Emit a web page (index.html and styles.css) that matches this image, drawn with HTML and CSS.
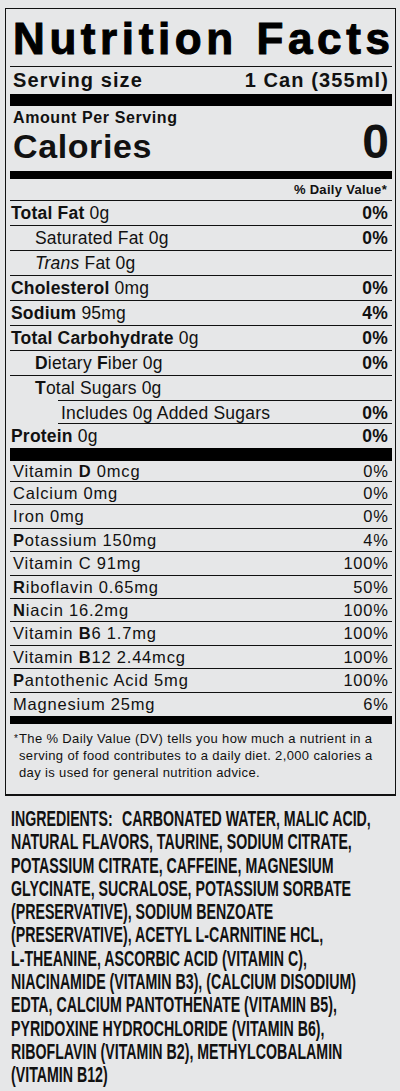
FILE: index.html
```html
<!DOCTYPE html>
<html lang="en">
<head>
    <meta charset="UTF-8">
    <meta name="viewport" content="width=device-width, initial-scale=1.0">
    <title>Nutrition Facts</title>
    <link rel="stylesheet" href="styles.css">
</head>
<body>
    <div class="label">
        <h1 class="title">Nutrition Facts</h1>

        <div class="serving">
            <span>Serving size</span>
            <span>1 Can (355ml)</span>
        </div>

        <div class="amount">Amount Per Serving</div>
        <div class="calories">
            <span class="cal-label">Calories</span>
            <span class="cal-value">0</span>
        </div>

        <div class="dv-head">% Daily Value*</div>

        <div class="row"><span><b>Total Fat</b> 0g</span><b>0%</b></div>
        <div class="row sub"><span>Saturated Fat 0g</span><b>0%</b></div>
        <div class="row sub"><span><i>Trans</i> Fat 0g</span></div>
        <div class="row"><span><b>Cholesterol</b> 0mg</span><b>0%</b></div>
        <div class="row"><span><b>Sodium</b> 95mg</span><b>4%</b></div>
        <div class="row"><span><b>Total Carbohydrate</b> 0g</span><b>0%</b></div>
        <div class="row sub"><span><b>D</b>ietary <b>F</b>iber 0g</span><b>0%</b></div>
        <div class="row sub no-line"><span><b>T</b>otal Sugars 0g</span></div>
        <div class="row added"><span>Includes 0g Added Sugars</span><b>0%</b></div>
        <div class="row last"><span><b>Protein</b> 0g</span><b>0%</b></div>

        <div class="vit first"><span>Vitamin <b>D</b> 0mcg</span><span>0%</span></div>
        <div class="vit"><span>Calcium 0mg</span><span>0%</span></div>
        <div class="vit"><span>Iron 0mg</span><span>0%</span></div>
        <div class="vit"><span><b>P</b>otassium 150mg</span><span>4%</span></div>
        <div class="vit"><span>Vitamin C 91mg</span><span>100%</span></div>
        <div class="vit"><span><b>R</b>iboflavin 0.65mg</span><span>50%</span></div>
        <div class="vit"><span><b>N</b>iacin 16.2mg</span><span>100%</span></div>
        <div class="vit"><span>Vitamin <b>B</b>6 1.7mg</span><span>100%</span></div>
        <div class="vit"><span>Vitamin <b>B</b>12 2.44mcg</span><span>100%</span></div>
        <div class="vit"><span><b>P</b>antothenic Acid 5mg</span><span>100%</span></div>
        <div class="vit last"><span>Magnesium 25mg</span><span>6%</span></div>

        <div class="note">
            <span class="star">*</span>
            <p>The % Daily Value (DV) tells you how much a nutrient in a<br>serving of food contributes to a daily diet. 2,000 calories a<br>day is used for general nutrition advice.</p>
        </div>
    </div>

    <div class="ingredients">
        <div class="line">INGREDIENTS:<span class="gap"></span>CARBONATED WATER, MALIC ACID,</div>
        <div class="line">NATURAL FLAVORS, TAURINE, SODIUM CITRATE,</div>
        <div class="line">POTASSIUM CITRATE, CAFFEINE, MAGNESIUM</div>
        <div class="line">GLYCINATE, SUCRALOSE, POTASSIUM SORBATE</div>
        <div class="line">(PRESERVATIVE), SODIUM BENZOATE</div>
        <div class="line">(PRESERVATIVE), ACETYL L-CARNITINE HCL,</div>
        <div class="line">L-THEANINE, ASCORBIC ACID (VITAMIN C),</div>
        <div class="line">NIACINAMIDE (VITAMIN B3), (CALCIUM DISODIUM)</div>
        <div class="line">EDTA, CALCIUM PANTOTHENATE (VITAMIN B5),</div>
        <div class="line">PYRIDOXINE HYDROCHLORIDE (VITAMIN B6),</div>
        <div class="line">RIBOFLAVIN (VITAMIN B2), METHYLCOBALAMIN</div>
        <div class="line">(VITAMIN B12)</div>
    </div>
</body>
</html>
```

FILE: styles.css
```css
* {
    margin: 0;
    padding: 0;
    box-sizing: border-box;
}

html, body {
    overflow-x: hidden;
}

body {
    font-family: "Liberation Sans", Arial, sans-serif;
    background: #e6e7e8;
    color: #111;
    padding-top: 8px;
}

.label {
    margin-left: 5px;
    width: 391px;
    border: 1px solid #111;
    border-bottom-width: 2px;
    padding: 0 3px 0 4px;
}

.title {
    font-size: 44px;
    font-weight: bold;
    line-height: 47px;
    letter-spacing: 4.6px;
    word-spacing: 2px;
    -webkit-text-stroke: 1px #000;
    color: #000;
    padding: 6px 0 4px 3px;
    border-bottom: 1px solid #111;
    white-space: nowrap;
}

.serving {
    display: flex;
    justify-content: space-between;
    height: 39px;
    line-height: 27px;
    font-size: 20px;
    font-weight: bold;
    letter-spacing: 1.1px;
    padding: 0 3px 0 3px;
    border-bottom: 12px solid #000;
}

.amount {
    font-size: 16px;
    font-weight: bold;
    letter-spacing: 0.6px;
    line-height: 18px;
    padding: 3px 0 0 3px;
}

.calories {
    display: flex;
    justify-content: space-between;
    align-items: baseline;
    height: 52px;
    padding: 0 3px 0 3px;
    border-bottom: 8px solid #000;
}

.cal-label {
    font-size: 34px;
    font-weight: bold;
    letter-spacing: 0.6px;
    line-height: 29px;
}

.cal-value {
    font-size: 48px;
    font-weight: bold;
    line-height: 29px;
}

.dv-head {
    text-align: right;
    font-size: 13px;
    font-weight: bold;
    letter-spacing: 0.3px;
    line-height: 21px;
    height: 22px;
    padding-right: 5px;
    border-bottom: 1px solid #111;
}

.row {
    display: flex;
    justify-content: space-between;
    height: 25px;
    padding: 1px 4px 0 1px;
    font-size: 17.5px;
    letter-spacing: 0.2px;
    line-height: 23px;
    border-bottom: 1px solid #111;
    white-space: nowrap;
}

.row.sub {
    padding-left: 25px;
}

.row.no-line {
    border-bottom: none;
    height: 24px;
}

.row.added {
    margin-left: 48px;
    padding-left: 3px;
    border-top: 1px solid #111;
    height: 24px;
}

.row.last {
    height: 37px;
    border-bottom: 13px solid #000;
}

.vit {
    display: flex;
    justify-content: space-between;
    height: 23.4px;
    padding: 1px 4px 0 3px;
    font-size: 16.5px;
    letter-spacing: 0.8px;
    line-height: 21.4px;
    border-bottom: 1px solid #111;
    white-space: nowrap;
}

.vit span:last-child {
    margin-right: -0.8px;
}

.vit.first {
    height: 21px;
    padding-top: 0;
    line-height: 20px;
}

.vit.last {
    height: 31.4px;
    border-bottom: 8px solid #000;
}

.note {
    display: flex;
    padding: 6px 0 13px 4px;
    font-size: 13px;
    letter-spacing: 0.36px;
    line-height: 17px;
    white-space: nowrap;
}

.star {
    font-size: 10px;
    width: 5px;
    flex-shrink: 0;
}

.ingredients {
    padding: 12px 0 0 11px;
}

.line {
    font-size: 21.5px;
    font-weight: bold;
    line-height: 23.3px;
    white-space: nowrap;
    transform: scaleX(0.66);
    transform-origin: left center;
    color: #111;
}

.gap {
    display: inline-block;
    width: 14px;
}
```
